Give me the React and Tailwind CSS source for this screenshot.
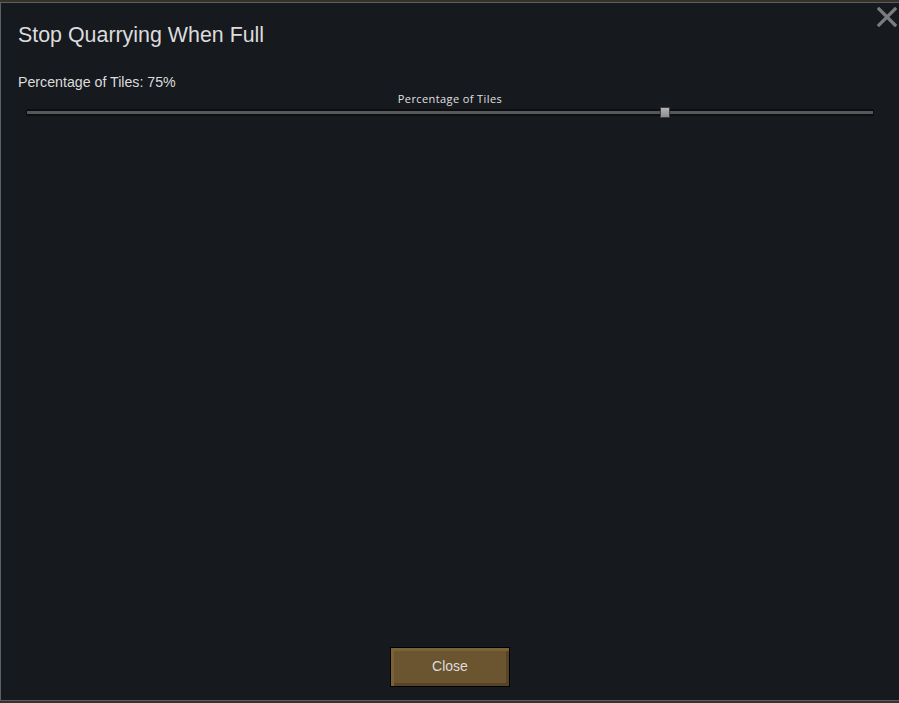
import React from "react";

export default function App() {
  return (
    <div className="w-[899px] h-[703px] bg-[#3a3125] pt-[2px] overflow-hidden" style={{ fontFamily: '"Liberation Sans", Arial, sans-serif' }}>
      <div className="relative h-[699px] border-t border-b border-l border-[#56606c] bg-[#16191e] flex flex-col pl-[17px] pr-[17px]">
        <button className="absolute right-[3px] top-[4px] w-[19px] h-[19px] text-[#7b7c7e]">
          <svg viewBox="0 0 20 20" width="20" height="20">
            <path d="M2 2 L18 18 M18 2 L2 18" stroke="currentColor" strokeWidth="3.2" strokeLinecap="square" fill="none" />
          </svg>
        </button>
        <h1 className="mt-[19px] text-[21.4px] leading-[26px] text-[#dcdcdc]">Stop Quarrying When Full</h1>
        <div className="mt-[25px] text-[14.2px] leading-[18px] text-[#dcdcdc]">Percentage of Tiles: 75%</div>
        <div className="mt-[1px] text-center text-[11px] leading-[14px] tracking-[0.4px] text-[#e0e0e0]" style={{ fontFamily: '"Open Sans", "Noto Sans", sans-serif' }}>
          Percentage of Tiles
        </div>
        <div className="relative mt-[1px] ml-[8px] mr-[8px] h-[11px] flex items-center">
          <div className="w-full h-[7px] rounded-[2px] bg-[#0d0f11] border border-[#0c0d0f] flex items-center">
            <div className="w-full h-[3px] bg-[#55575b]" />
          </div>
          <div className="absolute left-[634px] top-[0px] w-[10px] h-[11px] border border-[#3c3d40] bg-gradient-to-b from-[#b4b4b4] to-[#8e8e8e]" />
        </div>
        <div className="flex-1" />
        <div className="flex justify-center mb-[13px]">
          <button className="w-[120px] h-[40px] pb-[1px] border border-black bg-[#6b5430] text-[14px] text-[#dcdcdc] flex items-center justify-center"
            style={{ boxShadow: "inset 3px 3px 0 #7a6136, inset -3px -3px 0 #574426" }}>
            Close
          </button>
        </div>
      </div>
    </div>
  );
}
